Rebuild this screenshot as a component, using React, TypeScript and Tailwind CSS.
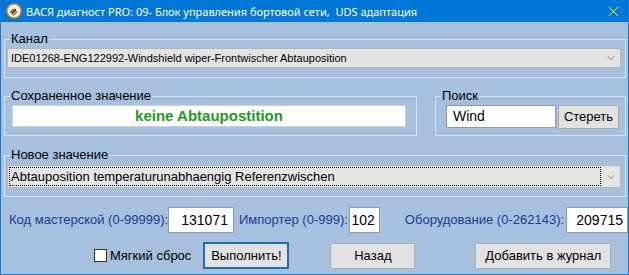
import { ChevronDown, X } from 'lucide-react';

const font = { fontFamily: '"Liberation Sans", Arial, sans-serif' };

function AppIcon() {
  return (
    <svg width="16" height="16" viewBox="0 0 16 16">
      <circle cx="8" cy="8" r="7" fill="#fff4e0" stroke="#e08a2a" strokeWidth="1.5" />
      <path d="M4 9 L7 6 L11 9 L8 12 Z" fill="#c8a060" stroke="#704020" strokeWidth="0.8" />
      <path d="M6 10 L10 6" stroke="#3a2010" strokeWidth="1.2" />
    </svg>
  );
}

function Legend({ children }: { children: React.ReactNode }) {
  return <legend className="ml-[5px] px-[1px] text-[13px] leading-[16px] text-black">{children}</legend>;
}

export default function App() {
  return (
    <div className="w-[629px] h-[275px] bg-[#a6c0dd] border-x border-b border-[#1a78d4] flex flex-col overflow-hidden" style={font}>
      {/* title bar */}
      <div className="h-[22px] bg-[#0078d7] flex items-center pl-[5px] shrink-0">
        <AppIcon />
        <span className="ml-[4px] text-white text-[11px] leading-none whitespace-nowrap" style={{ fontFamily: '"Noto Sans", "Open Sans", sans-serif' }}>
          ВАСЯ диагност PRO: 09- Блок управления бортовой сети,&nbsp; UDS адаптация
        </span>
        <X size={17} strokeWidth={1.3} className="ml-auto mr-[6px] text-white" />
      </div>

      <div className="flex flex-col pl-[3px]">
        {/* Канал */}
        <fieldset className="mt-[9px] w-[622px] border border-[#d3e1f0] pb-[9px]">
          <Legend>Канал</Legend>
          <div className="ml-[2px] mt-[1px] w-[614px] h-[20px] bg-[#e3e3e3] border border-[#b4b4b4] flex items-center pl-[3px] pr-[3px]">
            <span className="text-[11px] text-black whitespace-nowrap">IDE01268-ENG122992-Windshield wiper-Frontwischer Abtauposition</span>
            <ChevronDown size={12} strokeWidth={1.3} className="ml-auto text-[#555]" />
          </div>
        </fieldset>

        {/* Сохраненное значение + Поиск */}
        <div className="flex mt-[10px]">
          <fieldset className="w-[413px] border border-[#d3e1f0] pb-[7px]">
            <Legend>Сохраненное значение</Legend>
            <div className="ml-[7px] mt-[1px] w-[394px] h-[22px] bg-white border border-[#c8d4e2] flex items-center justify-center">
              <span className="text-[15px] font-bold text-[#1d9a1d]">keine Abtaupostition</span>
            </div>
          </fieldset>
          <fieldset className="ml-[18px] w-[191px] border border-[#d3e1f0] pb-[6px]">
            <Legend>Поиск</Legend>
            <div className="flex items-start mt-[1px] ml-[10px]">
              <div className="w-[110px] h-[23px] bg-white border border-[#8a9bb0] flex items-center pl-[6px]">
                <span className="text-[14px] text-black">Wind</span>
              </div>
              <button className="ml-[2px] w-[61px] h-[24px] bg-[#e1e1e1] border border-[#adadad] text-[13px] text-black">
                Стереть
              </button>
            </div>
          </fieldset>
        </div>

        {/* Новое значение */}
        <fieldset className="mt-[11px] w-[622px] border border-[#d3e1f0] pb-[8px]">
          <Legend>Новое значение</Legend>
          <div className="ml-[2px] mt-[2px] w-[614px] h-[23px] bg-[#e5e5e5] border border-[#b4b4b4] flex items-center pl-[1px] pr-[3px]">
            <div className="h-[19px] w-[592px] border border-dotted border-black flex items-center pl-[1px]">
              <span className="text-[13px] text-black whitespace-nowrap">Abtauposition temperaturunabhaengig Referenzwischen</span>
            </div>
            <ChevronDown size={12} strokeWidth={1.3} className="ml-auto text-[#555]" />
          </div>
        </fieldset>

        {/* codes row */}
        <div className="flex items-center mt-[10px] h-[26px] text-[13px] text-[#1c3c96] whitespace-nowrap">
          <span className="ml-[5px]">Код мастерской (0-99999):</span>
          <div className="w-[66px] h-[26px] bg-white border border-[#8a9bb0] flex items-center justify-end pr-[5px] text-[14px] text-black">131071</div>
          <span className="ml-[5px]">Импортер (0-999):</span>
          <div className="ml-[1px] w-[31px] h-[26px] bg-white border border-[#8a9bb0] flex items-center justify-end pr-[4px] text-[14px] text-black">102</div>
          <span className="ml-[25px]">Оборудование (0-262143):</span>
          <div className="ml-[2px] w-[62px] h-[26px] bg-white border border-[#8a9bb0] flex items-center justify-end pr-[4px] text-[14px] text-black">209715</div>
        </div>

        {/* buttons row */}
        <div className="flex items-center mt-[9px] h-[27px] text-[13px] text-black whitespace-nowrap">
          <div className="ml-[90px] w-[13px] h-[13px] bg-white border border-[#333]" />
          <span className="ml-[3px]">Мягкий сброс</span>
          <button className="ml-[12px] w-[86px] h-[27px] bg-[#e1e1e1] border-2 border-[#1f6fa8] outline outline-1 outline-[#e1e1e1] -outline-offset-4">
            Выполнить!
          </button>
          <button className="ml-[41px] w-[85px] h-[26px] bg-[#e1e1e1] border border-[#adadad]">Назад</button>
          <button className="ml-[60px] w-[136px] h-[26px] bg-[#e1e1e1] border border-[#adadad]">Добавить в журнал</button>
        </div>
      </div>
    </div>
  );
}
